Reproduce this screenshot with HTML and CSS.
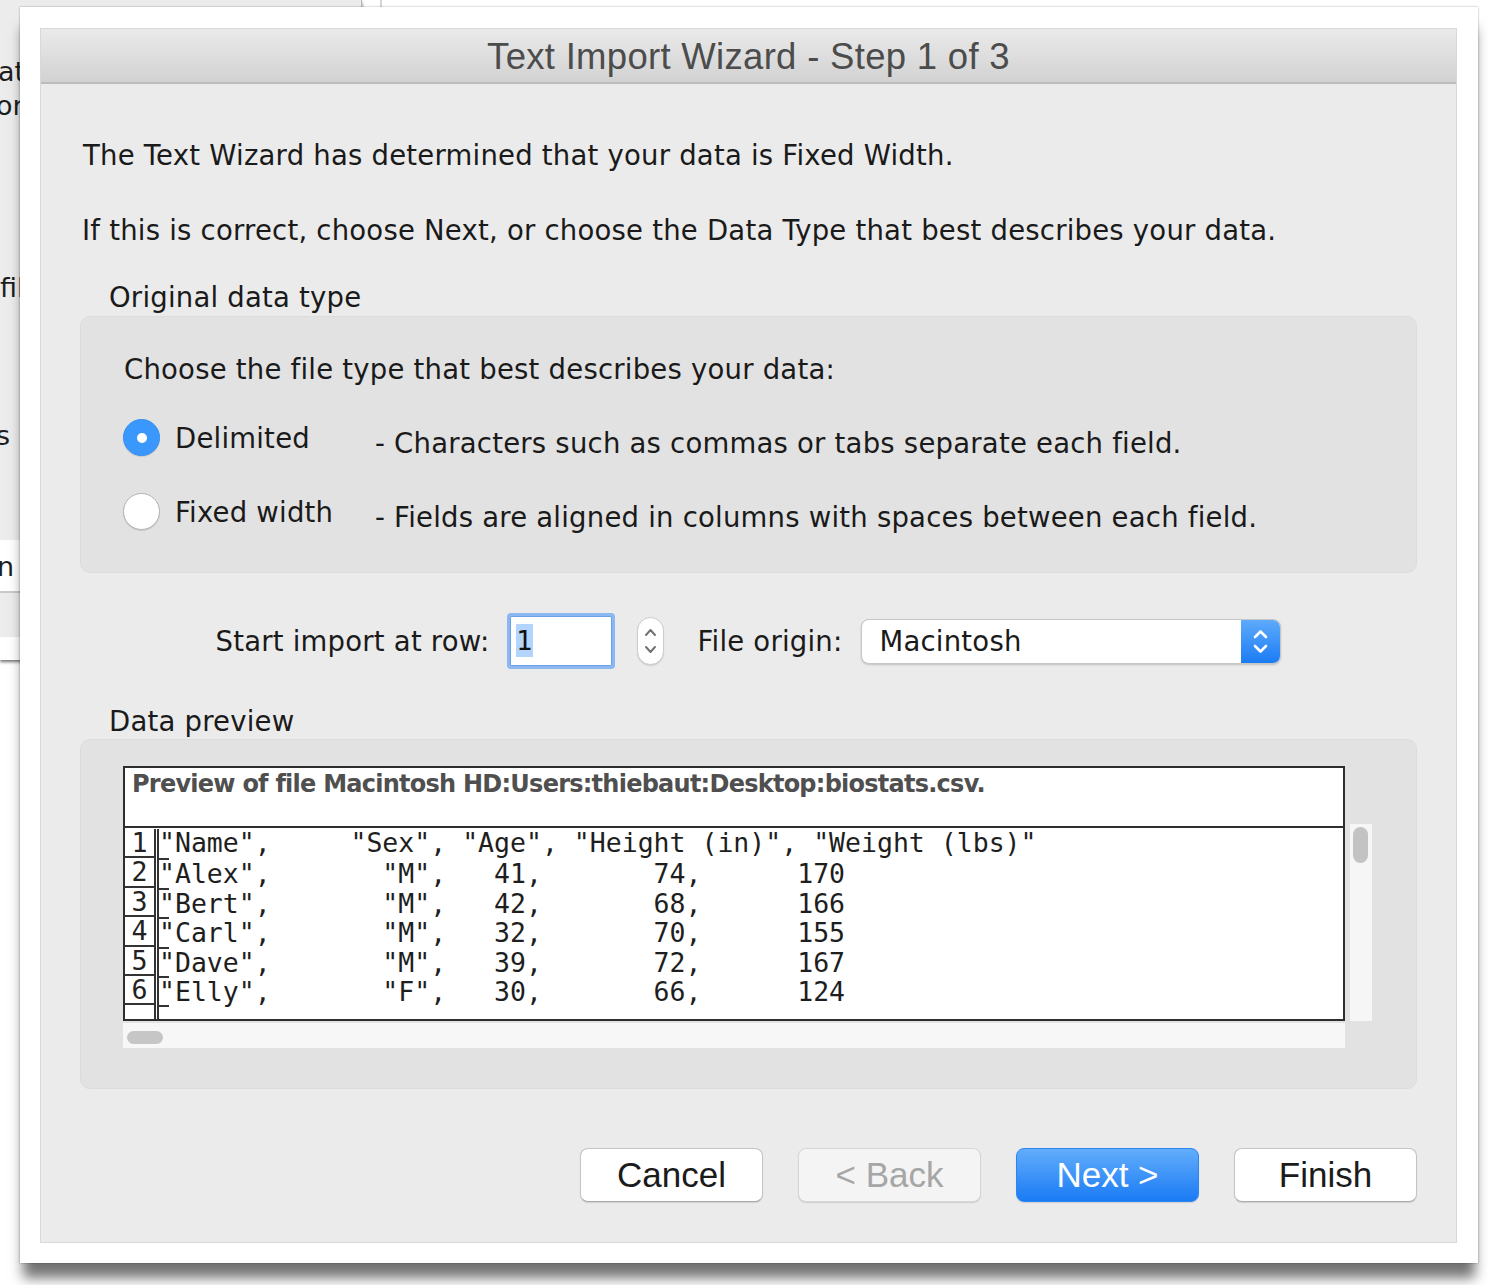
FILE: index.html
```html
<!DOCTYPE html>
<html lang="en">
<head>
<meta charset="utf-8">
<title>Text Import Wizard - Step 1 of 3</title>
<link rel="stylesheet" href="styles.css">
</head>
<body>
<div class="desktop">
  <div class="back-window">
    <span class="frag frag-at">at</span>
    <span class="frag frag-or">or</span>
    <span class="frag frag-fil">fil</span>
    <span class="frag frag-s">s</span>
    <div class="back-row back-row-a"><span class="frag frag-n">n</span></div>
    <div class="back-row back-row-b"></div>
  </div>
  <div class="back-edge"></div>
</div>

<div class="frame">
  <div class="window">
    <div class="titlebar">Text Import Wizard - Step 1 of 3</div>
    <div class="content">
      <p class="intro intro-first">The Text Wizard has determined that your data is Fixed Width.</p>
      <p class="intro intro-second">If this is correct, choose Next, or choose the Data Type that best describes your data.</p>

      <div class="group-label label-type">Original data type</div>
      <section class="group group-type">
        <div class="prompt">Choose the file type that best describes your data:</div>
        <div class="option option-first">
          <span class="radio radio-on"></span>
          <span class="option-name">Delimited</span>
          <span class="option-desc">- Characters such as commas or tabs separate each field.</span>
        </div>
        <div class="option option-second">
          <span class="radio"></span>
          <span class="option-name">Fixed width</span>
          <span class="option-desc">- Fields are aligned in columns with spaces between each field.</span>
        </div>
      </section>

      <div class="import-row">
        <span class="field-label">Start import at row:</span>
        <span class="row-input"><span class="row-value">1</span></span>
        <span class="stepper">
          <svg width="27" height="48" viewBox="0 0 27 48"><path d="M9 18 L13.5 13 L18 18" fill="none" stroke="#727272" stroke-width="2" stroke-linecap="round" stroke-linejoin="round"/><path d="M9 30 L13.5 35 L18 30" fill="none" stroke="#727272" stroke-width="2" stroke-linecap="round" stroke-linejoin="round"/></svg>
        </span>
        <span class="field-label label-origin">File origin:</span>
        <span class="popup">
          <span class="popup-value">Macintosh</span>
          <span class="popup-cap">
            <svg width="39" height="45" viewBox="0 0 39 45"><path d="M14 18 L19.5 12.5 L25 18" fill="none" stroke="#fff" stroke-width="2.6" stroke-linecap="round" stroke-linejoin="round"/><path d="M14 27 L19.5 32.5 L25 27" fill="none" stroke="#fff" stroke-width="2.6" stroke-linecap="round" stroke-linejoin="round"/></svg>
          </span>
        </span>
      </div>

      <div class="group-label label-preview">Data preview</div>
      <section class="group group-preview">
        <div class="preview-wrap">
          <div class="preview">
            <div class="preview-head">Preview of file Macintosh HD:Users:thiebaut:Desktop:biostats.csv.</div>
            <div class="preview-rows">
              <div class="prow"><span class="pnum">1</span><span class="ptext">"Name",     "Sex", "Age", "Height (in)", "Weight (lbs)"</span></div>
              <div class="prow"><span class="pnum">2</span><span class="ptext">"Alex",       "M",   41,       74,      170</span></div>
              <div class="prow"><span class="pnum">3</span><span class="ptext">"Bert",       "M",   42,       68,      166</span></div>
              <div class="prow"><span class="pnum">4</span><span class="ptext">"Carl",       "M",   32,       70,      155</span></div>
              <div class="prow"><span class="pnum">5</span><span class="ptext">"Dave",       "M",   39,       72,      167</span></div>
              <div class="prow"><span class="pnum">6</span><span class="ptext">"Elly",       "F",   30,       66,      124</span></div>
              <div class="prow"><span class="pnum"></span><span class="ptext"></span></div>
            </div>
          </div>
          <div class="vscroll"><span class="vthumb"></span></div>
        </div>
        <div class="hscroll"><span class="hthumb"></span></div>
      </section>

      <div class="buttons">
        <button class="btn" type="button">Cancel</button>
        <button class="btn btn-disabled" type="button">&lt; Back</button>
        <button class="btn btn-default" type="button">Next &gt;</button>
        <button class="btn" type="button">Finish</button>
      </div>
    </div>
  </div>
</div>
</body>
</html>
```

FILE: styles.css
```css
* {
  box-sizing: border-box;
}

html, body {
  margin: 0;
  padding: 0;
}

body {
  width: 1488px;
  height: 1285px;
  overflow: hidden;
  background: #ffffff;
  font-family: "DejaVu Sans", "Liberation Sans", sans-serif;
  color: #1a1a1a;
  padding: 7px 0 0 20px;
}

/* ---- desktop behind the dialog ---- */
.desktop {
  position: absolute;
  left: 0;
  top: 0;
  width: 1488px;
  height: 1285px;
  z-index: 0;
}

.back-window {
  position: absolute;
  left: 0;
  top: 0;
  width: 362px;
  height: 660px;
  background: #ececec;
  border-right: 1px solid #b9b9b9;
  box-shadow: 0 2px 3px rgba(0, 0, 0, 0.55);
}

.back-edge {
  position: absolute;
  left: 380px;
  top: 0;
  width: 2px;
  height: 10px;
  background: #d4d4d4;
}

.back-row {
  position: absolute;
  left: 0;
  width: 362px;
  background: #ffffff;
}

.back-row-a {
  top: 540px;
  height: 53px;
  border-bottom: 2px solid #c9c9c9;
}

.back-row-b {
  top: 637px;
  height: 23px;
}

.frag {
  position: absolute;
  font-size: 27px;
  line-height: 30px;
  color: #1e1e1e;
  white-space: nowrap;
}

.frag-at { left: -2px; top: 57px; }
.frag-or { left: -4px; top: 91px; }
.frag-fil { left: 0; top: 273px; }
.frag-s { left: -4px; top: 421px; }
.frag-n { left: -3px; top: 12px; }

/* ---- screenshot frame ---- */
.frame {
  position: relative;
  z-index: 1;
  width: 1458px;
  height: 1256px;
  padding: 21px 21px 20px 20px;
  background: #ffffff;
  box-shadow: 0 0 2px rgba(0, 0, 0, 0.35), 0 18px 12px -3px rgba(0, 0, 0, 0.55);
}

/* ---- dialog window ---- */
.window {
  width: 1417px;
  height: 1215px;
  background: #ebebeb;
  border: 1px solid #d9d9d9;
  display: flex;
  flex-direction: column;
}

.titlebar {
  height: 55px;
  flex: none;
  background: linear-gradient(#eaeaea, #d2d2d2);
  border-bottom: 2px solid #bcbcbc;
  font-family: "Liberation Sans", Arial, sans-serif;
  font-size: 36.5px;
  letter-spacing: 0.3px;
  color: #4c4c4c;
  text-align: center;
  line-height: 56px;
}

.content {
  padding: 0 39px 0 39px;
  display: flex;
  flex-direction: column;
  letter-spacing: 0.22px;
}

.intro {
  margin: 0;
  font-size: 27.5px;
  line-height: 36px;
  white-space: nowrap;
}

.intro-first {
  margin-top: 53px;
  padding-left: 3px;
}

.intro-second {
  margin-top: 39px;
  padding-left: 2px;
}

.group-label {
  font-size: 27.5px;
  line-height: 36px;
  padding-left: 29px;
}

.label-type {
  margin-top: 31px;
}

.label-preview {
  margin-top: 34px;
}

.group {
  background: #e2e2e2;
  border: 1px solid #dcdcdc;
  border-radius: 10px;
}

/* ---- file type group ---- */
.group-type {
  margin-top: 1px;
  height: 257px;
  padding: 34px 0 0 42px;
}

.prompt {
  font-size: 27.5px;
  line-height: 36px;
  padding-left: 1px;
}

.option {
  display: flex;
  align-items: flex-start;
  height: 40px;
  font-size: 27.5px;
}

.option-first {
  margin-top: 31px;
}

.option-second {
  margin-top: 34px;
}

.radio {
  width: 37px;
  height: 37px;
  margin-top: 1px;
  border-radius: 50%;
  background: #ffffff;
  border: 1px solid #b3b3b3;
  box-shadow: 0 1px 1px rgba(0, 0, 0, 0.12);
  flex: none;
  display: flex;
  align-items: center;
  justify-content: center;
}

.radio-on {
  background: #3a97fc;
  border-color: #3590f5;
}

.radio-on::after {
  content: "";
  width: 10px;
  height: 10px;
  border-radius: 50%;
  background: #ffffff;
}

.option-name {
  width: 200px;
  margin-left: 15px;
  line-height: 40px;
  flex: none;
}

.option-desc {
  padding-top: 10px;
  line-height: 30px;
  white-space: nowrap;
}

/* ---- start row / origin ---- */
.import-row {
  margin-top: 40px;
  height: 56px;
  display: flex;
  align-items: center;
  justify-content: center;
  font-size: 27.5px;
}

.field-label {
  white-space: nowrap;
  line-height: 36px;
}

.row-input {
  width: 108px;
  height: 56px;
  margin-left: 17px;
  border: 3px solid #8db7f1;
  border-radius: 4px;
  background: #ffffff;
  box-shadow: inset 0 0 0 1px #6b9fe6;
  padding: 8px 0 0 6px;
  flex: none;
}

.row-value {
  display: block;
  width: 17px;
  height: 33px;
  background: #b3d5fd;
  font-family: "DejaVu Sans Mono", "Liberation Mono", monospace;
  font-size: 27px;
  letter-spacing: 0;
  line-height: 33px;
  color: #111111;
  text-align: center;
}

.stepper {
  width: 27px;
  height: 48px;
  margin-left: 22px;
  background: #ffffff;
  border: 1px solid #cbcbcb;
  border-radius: 14px;
  box-shadow: 0 1px 1px rgba(0, 0, 0, 0.12);
  flex: none;
  display: flex;
  align-items: center;
  justify-content: center;
}

.stepper svg {
  display: block;
  flex: none;
}

.label-origin {
  margin-left: 34px;
}

.popup {
  width: 420px;
  height: 45px;
  margin-left: 19px;
  background: #ffffff;
  border: 1px solid #c6c6c6;
  border-radius: 8px;
  box-shadow: 0 1px 2px rgba(0, 0, 0, 0.18);
  display: flex;
  align-items: stretch;
  flex: none;
  overflow: hidden;
}

.popup-value {
  flex: 1;
  padding-left: 17px;
  line-height: 43px;
}

.popup-cap {
  width: 39px;
  flex: none;
  background: linear-gradient(#5eaafb, #1b7cf4);
  display: flex;
  align-items: center;
  justify-content: center;
}

.popup-cap svg {
  display: block;
}

/* ---- data preview ---- */
.group-preview {
  height: 350px;
  padding: 26px 0 0 42px;
  letter-spacing: 0;
}

.preview-wrap {
  display: flex;
  align-items: flex-start;
}

.preview {
  width: 1222px;
  height: 255px;
  border: 2px solid #2e2e2e;
  background: #ffffff;
  flex: none;
}

.preview-head {
  height: 60px;
  border-bottom: 2px solid #2e2e2e;
  padding-left: 7px;
  font-size: 24px;
  font-weight: bold;
  letter-spacing: -0.75px;
  line-height: 32px;
  color: #4f4f4f;
  white-space: nowrap;
}

.preview-rows {
  height: 191px;
  overflow: hidden;
  padding-top: 1px;
}

.prow {
  display: flex;
  height: 29.4px;
}

.pnum {
  width: 31px;
  flex: none;
  border-right: 2px solid #333333;
  border-bottom: 2px solid #333333;
  font-family: "DejaVu Sans Mono", "Liberation Mono", monospace;
  font-size: 26.6px;
  line-height: 27px;
  text-align: center;
  color: #222222;
}

.ptext {
  margin-left: 1px;
  border-left: 2px solid #333333;
  border-top: 2px solid #333333;
  width: 12px;
  overflow: visible;
  white-space: pre;
  font-family: "DejaVu Sans Mono", "Liberation Mono", monospace;
  font-size: 26.5px;
  line-height: 27px;
  color: #1e1e1e;
}

.prow:first-child .ptext {
  border-top: none;
}

.vscroll {
  width: 22px;
  height: 197px;
  margin: 58px 0 0 5px;
  background: #f6f6f6;
  padding: 3px 0 0 3px;
  flex: none;
}

.vthumb {
  display: block;
  width: 15px;
  height: 36px;
  border-radius: 8px;
  background: #c3c3c3;
}

.hscroll {
  width: 1222px;
  height: 25px;
  margin-top: 2px;
  background: #f7f7f7;
  padding: 8px 0 0 4px;
}

.hthumb {
  display: block;
  width: 36px;
  height: 13px;
  border-radius: 7px;
  background: #c6c6c6;
}

/* ---- buttons ---- */
.buttons {
  margin-top: 59px;
  display: flex;
  justify-content: flex-end;
  gap: 35px;
  letter-spacing: 0;
}

.btn {
  width: 183px;
  height: 54px;
  border: 1px solid #c4c4c4;
  border-bottom-color: #ababab;
  border-radius: 8px;
  background: #ffffff;
  box-shadow: 0 1px 1px rgba(0, 0, 0, 0.12);
  font-family: "Liberation Sans", Arial, sans-serif;
  font-size: 35px;
  color: #1b1b1b;
  padding: 0;
  line-height: 50px;
}

.btn-disabled {
  background: #f4f4f4;
  border-color: #d6d6d6;
  color: #a6a6a6;
}

.btn-default {
  background: linear-gradient(#62adfb, #1a7bf4);
  border-color: #2b86f3;
  color: #ffffff;
}
```
